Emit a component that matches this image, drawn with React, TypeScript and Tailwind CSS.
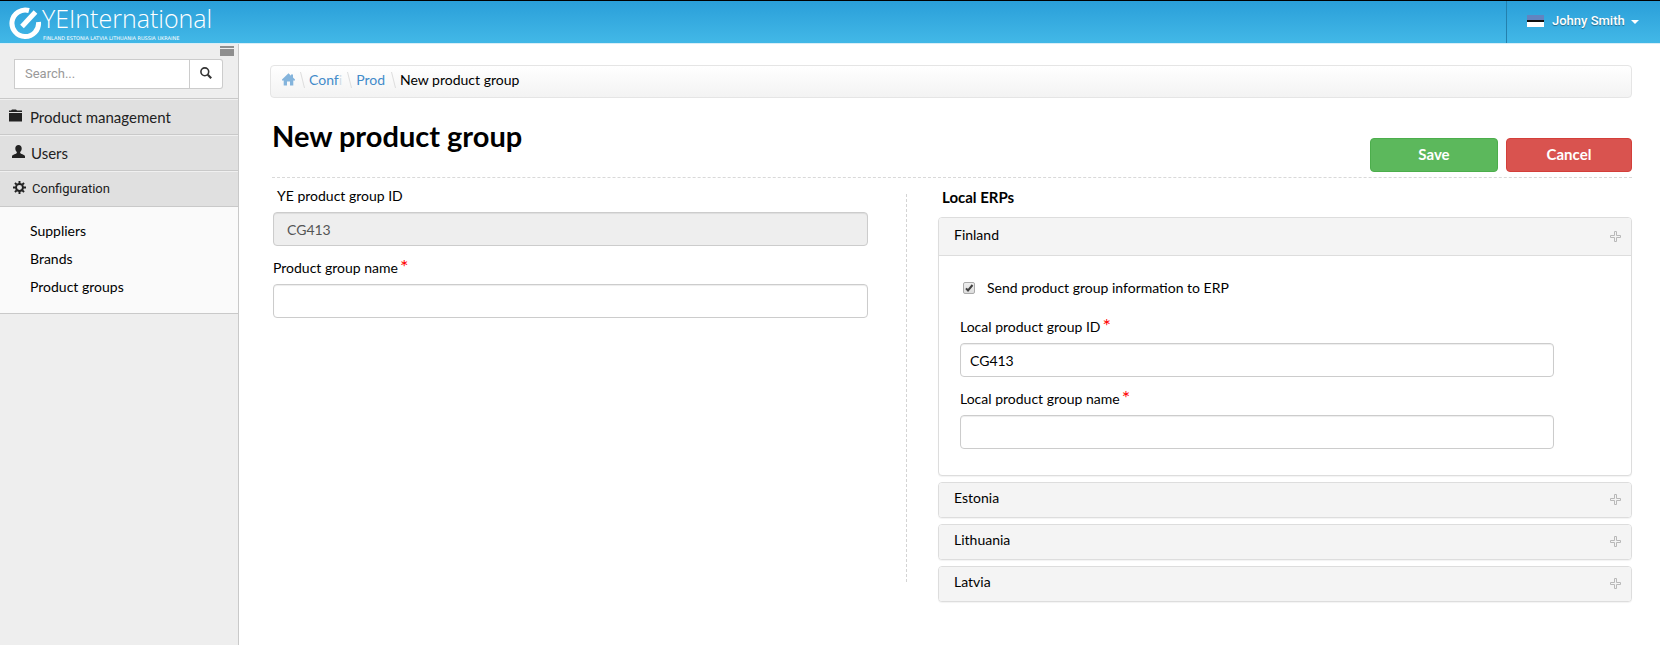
import React, { ReactNode } from "react";

const Plus = () => (
  <svg width="12" height="12" viewBox="0 0 12 12" fill="none" stroke="#b8b8b8" aria-hidden="true">
    <path d="M4.5.5h2v4h4v2h-4v4h-2v-4h-4v-2h4z" strokeLinejoin="round" />
  </svg>
);

const Star = () => <span className="text-[20px] leading-4 text-[#f00]">*</span>;

const inputClass =
  "block h-[34px] w-full rounded border border-[#ccc] px-[9px] text-[14px] text-black shadow-[inset_0_1px_1px_rgba(0,0,0,0.075)] outline-none";

function Field({ id, label, value, required }: { id: string; label: string; value?: string; required?: boolean }) {
  return (
    <div>
      <label htmlFor={id} className="flex h-[38px] items-start gap-0.5 pt-3 leading-[20px]">
        {label}
        {required && <Star />}
      </label>
      <input id={id} defaultValue={value} className={inputClass} />
    </div>
  );
}

function MenuItem({ icon, children }: { icon: ReactNode; children: ReactNode }) {
  return (
    <a
      href="#"
      className="flex h-9 items-center gap-1.5 border-t border-[#c9c9c9] bg-[#e0e0e0] pl-[9px] text-[#222] shadow-[inset_0_1px_0_#f0f0f0]"
    >
      {icon}
      {children}
    </a>
  );
}

function Panel({ title, children }: { title: string; children?: ReactNode }) {
  return (
    <section className="overflow-hidden rounded border border-[#ddd] bg-white shadow-[0_1px_1px_rgba(0,0,0,0.05)]">
      <button
        type="button"
        className={
          children
            ? "flex h-[37px] w-full items-center justify-between bg-[#f4f4f4] pr-[9px] pl-[15px] text-left"
            : "flex h-[34px] w-full items-center justify-between bg-[#f4f4f4] pr-[9px] pl-[15px] text-left"
        }
      >
        <span className="pb-1">{title}</span>
        <Plus />
      </button>
      {children}
    </section>
  );
}

const Slash = () => (
  <svg width="6" height="16" viewBox="0 0 6 16" stroke="#ddd" aria-hidden="true">
    <path d="M.5 0l4 16" />
  </svg>
);

export default function App() {
  return (
    <div className="flex min-h-screen flex-col bg-white font-['Lato','Liberation_Sans',sans-serif] text-[14px] leading-5 text-black">
      <header className="flex h-11 justify-between border-t border-b border-t-black border-b-[#d9eef7] bg-linear-to-b from-[#2a9fd9] to-[#42b8e7]">
        <a href="#" className="flex pl-[9px] text-white">
          <svg className="mt-[6px]" width="33" height="33" viewBox="0 0 33 33" fill="none" stroke="#fff" aria-hidden="true">
            <path d="M20 3.500A13.300 13.300 0 1 0 29.500 15" strokeWidth="5" />
            <path d="M13 19.500L26.500 5" strokeWidth="5" />
          </svg>
          <span className="flex flex-col">
            <span className="pt-0.5 font-['Open_Sans',sans-serif] text-[25px] leading-[31px] font-light">YEInternational</span>
            <span className="pt-px pl-px font-['DejaVu_Sans',sans-serif] text-[5px] leading-[6px]">
              FINLAND ESTONIA LATVIA LITHUANIA RUSSIA UKRAINE
            </span>
          </span>
        </a>
        <button
          type="button"
          className="flex w-[154px] items-center gap-2 border-l border-[#2480ad] pb-0.5 pl-5 font-['Roboto',sans-serif] text-[13px] font-medium text-white [text-shadow:0_1px_1px_rgba(0,0,0,0.4)]"
        >
          <svg width="17" height="12" viewBox="0 0 17 12" aria-hidden="true">
            <path fill="#6284c0" d="M0 0h17v5H0z" />
            <path fill="#111" d="M0 5h17v2H0z" />
            <path fill="#fff" d="M0 7h17v5H0z" />
          </svg>
          <span className="flex items-center gap-1.5">
            Johny Smith
            <svg className="mt-0.5" width="8" height="4" viewBox="0 0 8 4" fill="#fff" aria-hidden="true">
              <path d="M0 0h8L4 4z" />
            </svg>
          </span>
        </button>
      </header>

      <div className="flex flex-1">
        <aside className="w-[239px] shrink-0 border-r border-[#c9c9c9] bg-[#eee]">
          <div className="flex h-[15px] justify-end pt-0.5 pr-1">
            <button type="button" aria-label="Toggle menu" className="flex h-[10px] w-[14px] flex-col gap-px">
              <span className="block h-0.5 w-full bg-[#8f8f8f]" />
              <span className="block h-[7px] w-full bg-[#8f8f8f]" />
            </button>
          </div>
          <form className="mb-[9px] ml-[14px] flex h-[30px] w-[209px]" onSubmit={(e) => e.preventDefault()}>
            <input
              aria-label="Search"
              placeholder="Search..."
              className="min-w-0 flex-1 border border-[#ccc] bg-white px-[10px] font-['Roboto','Liberation_Sans',sans-serif] text-[13px] outline-none placeholder:text-[#999]"
            />
            <button
              type="submit"
              aria-label="Search"
              className="flex w-[33px] items-center justify-center rounded-r-[3px] border border-l-0 border-[#ccc] bg-white pb-0.5"
            >
              <svg width="12" height="12" viewBox="0 0 12 12" fill="none" stroke="#333" aria-hidden="true">
                <circle cx="4.800" cy="4.800" r="3.900" strokeWidth="1.600" />
                <path d="M7.800 7.800l3.400 3.400" strokeWidth="2.200" />
              </svg>
            </button>
          </form>
          <nav>
            <MenuItem
              icon={
                <svg className="mr-0.5 mb-0.5" width="13" height="13" viewBox="0 0 13 13" fill="#222" aria-hidden="true">
                  <path d="M0 3V1.500h2L3 .500h4l1 1h5V3zM0 4h13v8.500H0z" />
                </svg>
              }
            >
              <span className="text-[15px]">Product management</span>
            </MenuItem>
            <MenuItem
              icon={
                <svg className="mb-0.5 ml-[3px]" width="13" height="13" viewBox="0 0 13 13" fill="#222" aria-hidden="true">
                  <path d="M6.500 0C8.500 0 9.700 1.300 9.700 3.300c0 1.600-.6 3-1.500 3.800v1c.4.900 4.200 1.400 4.800 3.200V13H0v-1.700C.6 9.500 4.400 9 4.800 8.100v-1C3.900 6.300 3.300 4.900 3.300 3.300 3.300 1.300 4.500 0 6.500 0z" />
                </svg>
              }
            >
              <span className="text-[15px]">Users</span>
            </MenuItem>
            <MenuItem
              icon={
                <svg className="mb-0.5 ml-1" width="13" height="13" viewBox="0 0 12 12" fill="none" stroke="#222" aria-hidden="true">
                  <circle cx="6" cy="6" r="3.200" strokeWidth="1.800" />
                  <path
                    d="M6 0v2.500M6 9.500v2.500M0 6h2.500M9.500 6h2.500M1.800 1.800l1.600 1.600M8.600 8.600l1.600 1.600M10.200 1.800L8.600 3.400M3.400 8.600l-1.600 1.600"
                    strokeWidth="1.800"
                  />
                </svg>
              }
            >
              <span className="font-['Roboto',sans-serif] text-[13px]">Configuration</span>
            </MenuItem>
            <ul className="border-y border-[#c9c9c9] bg-[#fafafa] pt-[10px] pb-3 pl-[30px]">
              {["Suppliers", "Brands", "Product groups"].map((t) => (
                <li key={t} className="flex h-7 items-center">
                  <a href="#">{t}</a>
                </li>
              ))}
            </ul>
          </nav>
        </aside>

        <main className="min-w-0 flex-1 pt-[21px] pr-7 pl-[31px]">
          <nav
            aria-label="Breadcrumb"
            className="flex h-[33px] items-center gap-[3px] rounded border border-[#e5e5e5] bg-linear-to-b from-white to-[#f3f3f3] pb-1 pl-[11px]"
          >
            <a href="#" aria-label="Home" className="mr-0.5">
              <svg width="13" height="13" viewBox="0 0 13 13" fill="#84b4dc" aria-hidden="true">
                <path d="M6.500.300L9 2.700V1.500h2v3.100l2 2V7.500h-1.700v5H8V8.500H5v4H1.700v-5H0v-.9z" />
              </svg>
            </a>
            <Slash />
            <a href="#" className="mr-0.5 flex text-[#428bca]">
              <span>Conf</span>
              <span className="text-[#d3dde6]">i</span>
            </a>
            <Slash />
            <a href="#" className="mr-[3px] text-[#428bca]">
              Prod
            </a>
            <Slash />
            <span>New product group</span>
          </nav>

          <div className="ml-0.5 flex h-20 justify-between border-b border-dashed border-[#d9d9d9]">
            <h1 className="pt-[18px] text-[29px] leading-10 font-bold">New product group</h1>
            <div className="flex gap-2 pt-10">
              <button type="button" className="h-[34px] w-32 rounded border border-[#4cae4c] bg-[#5cb85c] pb-0.5 text-[15px] font-bold text-white">
                Save
              </button>
              <button type="button" className="h-[34px] w-[126px] rounded border border-[#d43f3a] bg-[#d9534f] pb-0.5 text-[15px] font-bold text-white">
                Cancel
              </button>
            </div>
          </div>

          <div className="grid grid-cols-[636fr_726fr] items-start">
            <div className="pr-[38px] pl-[3px]">
              <label htmlFor="ye-id" className="block h-[34px] pt-2 pl-1">
                YE product group ID
              </label>
              <input
                id="ye-id"
                readOnly
                value="CG413"
                className="block h-[34px] w-full rounded border border-[#ccc] bg-[#eee] px-[13px] text-[#555] shadow-[inset_0_1px_1px_rgba(0,0,0,0.075)] outline-none"
              />
              <Field id="pg-name" label="Product group name" required />
            </div>
            <div className="mt-4 h-[388px] border-l border-dashed border-[#d4d4d4]">
              <div className="-mt-4 pl-[31px]">
                <h2 className="h-[39px] pt-[9px] pl-1 text-[15px] font-bold">Local ERPs</h2>
                <div className="flex flex-col gap-1.5">
                  <Panel title="Finland">
                    <div className="border-t border-[#ddd] pt-[22px] pr-[77px] pb-[26px] pl-[21px]">
                      <label className="mb-[7px] flex items-center gap-3 pl-[3px]">
                        <span className="relative flex">
                          <input
                            type="checkbox"
                            defaultChecked
                            className="peer h-3 w-3 appearance-none rounded-xs border border-[#aaa] bg-linear-to-b from-[#eee] to-[#ddd]"
                          />
                          <svg
                            className="pointer-events-none absolute inset-0 hidden peer-checked:block"
                            width="12"
                            height="12"
                            viewBox="0 0 12 12"
                            fill="none"
                            stroke="#404040"
                            strokeWidth="2"
                            aria-hidden="true"
                          >
                            <path d="M3 6.300L5 8.500L9.500 3" />
                          </svg>
                        </span>
                        Send product group information to ERP
                      </label>
                      <Field id="local-id" label="Local product group ID" value="CG413" required />
                      <Field id="local-name" label="Local product group name" required />
                    </div>
                  </Panel>
                  <Panel title="Estonia" />
                  <Panel title="Lithuania" />
                  <Panel title="Latvia" />
                </div>
              </div>
            </div>
          </div>
        </main>
      </div>
    </div>
  );
}
